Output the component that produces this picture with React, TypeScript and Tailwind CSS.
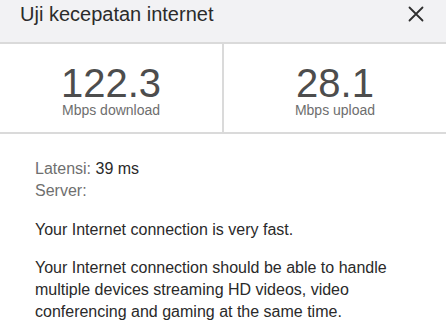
import React from "react";

const STATS = [
  { value: "122.3", label: "Mbps download" },
  { value: "28.1", label: "Mbps upload" },
];

export default function App() {
  return (
    <div className="w-[446px] h-[326px] overflow-hidden bg-white font-['Liberation_Sans',Arial,sans-serif]">
      <div className="h-[44px] bg-[#f2f2f4] border-b-2 border-[#dadada] flex items-start justify-between pl-5 pr-[22px] pt-[1px]">
        <h1 className="text-[20px] leading-[26px] text-[#2b2b2b]">Uji kecepatan internet</h1>
        <svg width="16" height="16" viewBox="0 0 16 16" className="mt-[5px]">
          <path d="M1.5 1.5 L14.5 14.5 M14.5 1.5 L1.5 14.5" stroke="#2f2f2f" strokeWidth="1.8" strokeLinecap="round" />
        </svg>
      </div>

      <div className="flex h-[90px] border-b-2 border-[#dadada]">
        {STATS.map((s, i) => (
          <div
            key={i}
            className={`flex-1 flex flex-col items-center pt-[21px] ${i === 0 ? "border-r-2 border-[#dadada]" : ""}`}
          >
            <div className="text-[40px] leading-[36px] text-[#4d4d4d]">{s.value}</div>
            <div className="text-[14px] leading-[18px] text-[#6e6e6e]">{s.label}</div>
          </div>
        ))}
      </div>

      <div className="px-[35px] pt-[24px] text-[16px] leading-[22px] text-[#2a2a2a]">
        <p>
          <span className="text-[#6f6f6f]">Latensi:</span> 39 ms
        </p>
        <p className="text-[#6f6f6f]">Server:</p>
        <p className="mt-[17px]">Your Internet connection is very fast.</p>
        <p className="mt-[16px]">
          Your Internet connection should be able to handle multiple devices streaming HD videos, video
          conferencing and gaming at the same time.
        </p>
      </div>
    </div>
  );
}
